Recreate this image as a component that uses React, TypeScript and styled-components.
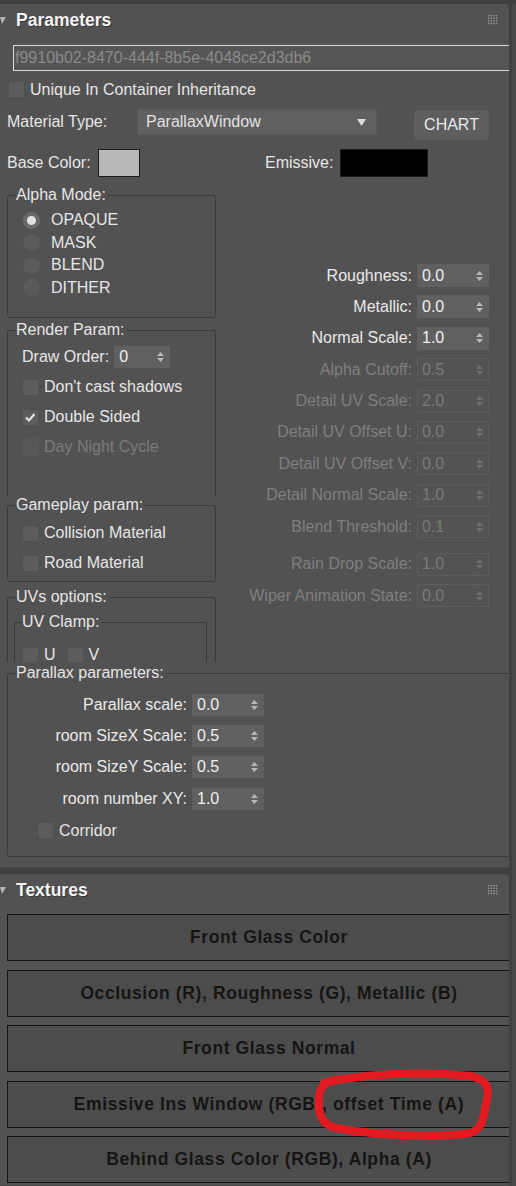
import styled, { createGlobalStyle } from 'styled-components';

const GlobalStyle = createGlobalStyle`
  html,
  body {
    margin: 0;
    padding: 0;
    background: #404040;
  }

  body {
    font-family: "Liberation Sans", Arial, sans-serif;
    font-size: 16px;
    color: #e6e6e6;
  }
`;

interface SpinParam {
  label: string;
  value: string;
  disabled?: boolean;
  spaced?: boolean;
}

const surfaceParams: SpinParam[] = [
  { label: 'Roughness:', value: '0.0' },
  { label: 'Metallic:', value: '0.0' },
  { label: 'Normal Scale:', value: '1.0' },
  { label: 'Alpha Cutoff:', value: '0.5', disabled: true },
  { label: 'Detail UV Scale:', value: '2.0', disabled: true },
  { label: 'Detail UV Offset U:', value: '0.0', disabled: true },
  { label: 'Detail UV Offset V:', value: '0.0', disabled: true },
  { label: 'Detail Normal Scale:', value: '1.0', disabled: true },
  { label: 'Blend Threshold:', value: '0.1', disabled: true },
  { label: 'Rain Drop Scale:', value: '1.0', disabled: true, spaced: true },
  { label: 'Wiper Animation State:', value: '0.0', disabled: true },
];

const parallaxParams: SpinParam[] = [
  { label: 'Parallax scale:', value: '0.0' },
  { label: 'room SizeX Scale:', value: '0.5' },
  { label: 'room SizeY Scale:', value: '0.5' },
  { label: 'room number XY:', value: '1.0' },
];

const alphaModes = ['OPAQUE', 'MASK', 'BLEND', 'DITHER'];

const textureSlots = [
  'Front Glass Color',
  'Occlusion (R), Roughness (G), Metallic (B)',
  'Front Glass Normal',
  'Emissive Ins Window (RGB), offset Time (A)',
  'Behind Glass Color (RGB), Alpha (A)',
];

function Grip() {
  return (
    <GripIcon width="10" height="10" viewBox="0 0 10 10" aria-hidden="true">
      {[0, 1, 2, 3].map((r) =>
        [0, 1, 2, 3].map((c) => (
          <rect key={`${r}-${c}`} x={c * 2.6} y={r * 2.6} width="1.4" height="1.4" fill="#9a9a9a" />
        )),
      )}
    </GripIcon>
  );
}

function RolloutTitle({ children }: { children: string }) {
  return (
    <RolloutHeader>
      <svg width="6" height="7" viewBox="0 0 6 7" aria-hidden="true">
        <polygon points="0,0 6,0 2,7" fill="#b4b4b4" />
      </svg>
      <Title>{children}</Title>
      <Grip />
    </RolloutHeader>
  );
}

function Spinner({ value, disabled, width = 72, height = 23 }: { value: string; disabled?: boolean; width?: number; height?: number }) {
  return (
    <SpinBox $disabled={disabled} $w={width} $h={height}>
      <span>{value}</span>
      <svg width="7" height="12" viewBox="0 0 7 12" aria-hidden="true">
        <path d="M0 5 3.5 1 7 5Z M0 7 3.5 11 7 7Z" fill={disabled ? '#707070' : '#b8b8b8'} />
      </svg>
    </SpinBox>
  );
}

function Check({ label, checked, disabled }: { label: string; checked?: boolean; disabled?: boolean }) {
  return (
    <CheckLabel $disabled={disabled}>
      <CheckBox $disabled={disabled}>
        {checked && (
          <svg width="17" height="17" viewBox="0 0 17 17" aria-hidden="true">
            <path d="M4 8.5 7 11.5 12.5 5" stroke="#e2e2e2" strokeWidth="2.2" fill="none" />
          </svg>
        )}
      </CheckBox>
      {label}
    </CheckLabel>
  );
}

function SpinRow({ param, labelWidth, height }: { param: SpinParam; labelWidth: number; height?: number }) {
  return (
    <ParamRow $spaced={param.spaced}>
      <ParamLabel $w={labelWidth} $disabled={param.disabled}>
        {param.label}
      </ParamLabel>
      <Spinner value={param.value} disabled={param.disabled} height={height} />
    </ParamRow>
  );
}

export default function App() {
  return (
    <Page>
      <GlobalStyle />
      <Column>
        <Rollout>
          <RolloutTitle>Parameters</RolloutTitle>
          <ParamsBody>
            <GuidField>f9910b02-8470-444f-8b5e-4048ce2d3db6</GuidField>
            <InheritRow>
              <Check label="Unique In Container Inheritance" />
            </InheritRow>

            <MaterialRow>
              <MaterialLabel>Material Type:</MaterialLabel>
              <Dropdown>
                <span>ParallaxWindow</span>
                <svg width="9" height="7" viewBox="0 0 9 7" aria-hidden="true">
                  <polygon points="0,0 9,0 4.5,7" fill="#dcdcdc" />
                </svg>
              </Dropdown>
              <ChartButton type="button">CHART</ChartButton>
            </MaterialRow>

            <ColorRow>
              <ColorCell>
                <FieldLabel>Base Color:</FieldLabel>
                <Swatch $color="#b8b8b8" $w={42} />
              </ColorCell>
              <ColorCell>
                <FieldLabel>Emissive:</FieldLabel>
                <Swatch $color="#000000" $w={88} />
              </ColorCell>
            </ColorRow>

            <MainGrid>
              <LeftColumn>
                <Group>
                  <Legend>Alpha Mode:</Legend>
                  <RadioList>
                    {alphaModes.map((mode, i) => (
                      <RadioRow key={mode}>
                        <Radio $on={i === 0} />
                        {mode}
                      </RadioRow>
                    ))}
                  </RadioList>
                </Group>

                <Group $open $mt={4}>
                  <Legend>Render Param:</Legend>
                  <RenderList>
                    <ItemRow>
                      <FieldLabel>Draw Order:</FieldLabel>
                      <Spinner value="0" width={56} height={22} />
                    </ItemRow>
                    <ItemRow>
                      <Check label="Don't cast shadows" />
                    </ItemRow>
                    <ItemRow>
                      <Check label="Double Sided" checked />
                    </ItemRow>
                    <ItemRow>
                      <Check label="Day Night Cycle" disabled />
                    </ItemRow>
                  </RenderList>
                </Group>

                <Group $mt={1}>
                  <Legend>Gameplay param:</Legend>
                  <GameplayList>
                    <ItemRow>
                      <Check label="Collision Material" />
                    </ItemRow>
                    <ItemRow>
                      <Check label="Road Material" />
                    </ItemRow>
                  </GameplayList>
                </Group>

                <ClippedGroup>
                  <Legend>UVs options:</Legend>
                  <InnerGroup>
                    <InnerLegend>UV Clamp:</InnerLegend>
                    <ClampRow>
                      <Check label="U" />
                      <Check label="V" />
                    </ClampRow>
                  </InnerGroup>
                </ClippedGroup>
              </LeftColumn>

              <RightColumn>
                {surfaceParams.map((p) => (
                  <SpinRow key={p.label} param={p} labelWidth={196} />
                ))}
              </RightColumn>
            </MainGrid>

            <ParallaxGroup>
              <Legend>Parallax parameters:</Legend>
              <ParallaxList>
                {parallaxParams.map((p) => (
                  <SpinRow key={p.label} param={p} labelWidth={179} height={22} />
                ))}
                <CorridorRow>
                  <Check label="Corridor" />
                </CorridorRow>
              </ParallaxList>
            </ParallaxGroup>
          </ParamsBody>
        </Rollout>

        <Rollout $grow>
          <RolloutTitle>Textures</RolloutTitle>
          <TextureList>
            {textureSlots.map((slot) => (
              <TextureButton key={slot} type="button">
                {slot}
              </TextureButton>
            ))}
          </TextureList>
        </Rollout>
      </Column>
      <ScrollTrack />

      <Annotation width="516" height="1186" viewBox="0 0 516 1186" aria-hidden="true">
        <path
          d="M324 1083 C 360 1074, 420 1071, 470 1076 C 489 1079, 490 1090, 486 1104 C 483 1118, 483 1129, 470 1133 C 440 1138, 380 1136, 336 1128 C 319 1124, 318 1110, 319 1096 C 320 1086, 326 1080, 342 1079"
          stroke="#e31b21"
          strokeWidth="8"
          fill="none"
          strokeLinecap="round"
          strokeLinejoin="round"
        />
      </Annotation>
    </Page>
  );
}

const Page = styled.div`
  position: relative;
  box-sizing: border-box;
  width: 516px;
  height: 1186px;
  padding-top: 4px;
  display: flex;
  overflow: hidden;
  background: #404040;
`;

const Column = styled.div`
  width: 509px;
  display: flex;
  flex-direction: column;
  gap: 6px;
`;

const ScrollTrack = styled.div`
  width: 4px;
  margin-left: 3px;
  background: #494949;
`;

const Rollout = styled.section<{ $grow?: boolean }>`
  flex: ${(p) => (p.$grow ? '1' : '0 0 auto')};
  overflow: hidden;
  border-radius: 0 4px 0 0;
  background: #525252;
  border-bottom: 1px solid #484848;
`;

const RolloutHeader = styled.div`
  height: 32px;
  display: flex;
  align-items: center;
  gap: 10px;
  padding-right: 11px;

  svg:first-child {
    margin-top: 1px;
  }
`;

const Title = styled.h2`
  flex: 1;
  margin: 0;
  color: #f4f4f4;
  font-size: 17.5px;
  font-weight: 700;
  text-shadow: 1px 1px 0 rgba(0, 0, 0, 0.35);
`;

const GripIcon = styled.svg`
  display: block;
`;

const ParamsBody = styled.div`
  padding: 9px 0 10px;
`;

const GuidField = styled.div`
  box-sizing: border-box;
  width: 520px;
  height: 26px;
  margin-left: 13px;
  padding-left: 1px;
  display: flex;
  align-items: center;
  border: 1px solid #dadada;
  color: #8a8a8a;
  background: #555555;
  white-space: nowrap;
`;

const InheritRow = styled.div`
  margin: 10px 0 0 8px;
  height: 17px;
  display: flex;
  align-items: center;
`;

const FieldLabel = styled.span`
  color: #e6e6e6;
  white-space: nowrap;
`;

const MaterialRow = styled.div`
  height: 30px;
  margin-top: 11px;
  padding-left: 7px;
  display: flex;
  align-items: flex-start;
`;

const MaterialLabel = styled(FieldLabel)`
  width: 130px;
  line-height: 26px;
`;

const Dropdown = styled.div`
  box-sizing: border-box;
  width: 240px;
  height: 26px;
  padding: 0 10px 0 8px;
  display: flex;
  align-items: center;
  justify-content: space-between;
  border: 1px solid #595959;
  color: #e2e2e2;
  background: #606060;
`;

const ChartButton = styled.button`
  box-sizing: border-box;
  width: 75px;
  height: 30px;
  margin: 1px 0 0 37px;
  padding: 0;
  border: none;
  border-radius: 5px;
  color: #e8e8e8;
  background: #5e5e5e;
  font: inherit;
  font-size: 16px;
`;

const ColorRow = styled.div`
  height: 28px;
  margin-top: 10px;
  padding-left: 7px;
  display: grid;
  grid-template-columns: 258px auto;
`;

const ColorCell = styled.div`
  display: flex;
  align-items: center;
  gap: 7px;
`;

const Swatch = styled.div<{ $color: string; $w: number }>`
  box-sizing: border-box;
  width: ${(p) => p.$w}px;
  height: 28px;
  border: 1px solid #1a1a1a;
  background: ${(p) => p.$color};
`;

const MainGrid = styled.div`
  margin-top: 10px;
  display: grid;
  grid-template-columns: 216px 1fr;
`;

const LeftColumn = styled.div`
  padding-left: 7px;
  display: flex;
  flex-direction: column;
`;

const Group = styled.fieldset<{ $open?: boolean; $mt?: number }>`
  box-sizing: border-box;
  min-width: 0;
  margin: ${(p) => p.$mt ?? 0}px 0 0;
  padding: 0;
  border: 1px solid #3b3b3b;
  border-radius: 3px;
  ${(p) => p.$open && 'border-bottom: none; border-radius: 3px 3px 0 0;'}
`;

const Legend = styled.legend`
  margin-left: 8px;
  padding: 0 2px 0 0;
  color: #e6e6e6;
  font-size: 16px;
  line-height: 16px;
`;

const InnerLegend = styled(Legend)`
  margin-left: 7px;
`;

const RadioList = styled.div`
  padding: 6px 0 18px 15px;
`;

const RadioRow = styled.div`
  height: 22.5px;
  display: flex;
  align-items: center;
  gap: 11px;
  color: #e6e6e6;
`;

const Radio = styled.span<{ $on?: boolean }>`
  position: relative;
  width: 17px;
  height: 17px;
  border-radius: 50%;
  background: ${(p) => (p.$on ? '#6a6a6a' : '#5a5a5a')};

  &::after {
    content: '';
    display: ${(p) => (p.$on ? 'block' : 'none')};
    position: absolute;
    inset: 4px;
    border-radius: 50%;
    background: #e4e4e4;
  }
`;

const RenderList = styled.div`
  padding: 4px 0 34px 14px;
`;

const GameplayList = styled.div`
  padding: 5px 0 3px 14px;
`;

const ItemRow = styled.div`
  height: 30px;
  display: flex;
  align-items: center;
  gap: 5px;
`;

const CheckLabel = styled.label<{ $disabled?: boolean }>`
  display: flex;
  align-items: center;
  gap: 5px;
  color: ${(p) => (p.$disabled ? '#7c7c7c' : '#e6e6e6')};
  white-space: nowrap;
`;

const CheckBox = styled.span<{ $disabled?: boolean }>`
  box-sizing: border-box;
  width: 17px;
  height: 17px;
  flex: 0 0 auto;
  border: 1px solid ${(p) => (p.$disabled ? '#585858' : '#505050')};
  background: ${(p) => (p.$disabled ? '#575757' : '#5c5c5c')};

  svg {
    display: block;
    margin: -1px;
  }
`;

const ClippedGroup = styled(Group)`
  height: 73px;
  margin-top: 7px;
  border-bottom: none;
  border-radius: 3px 3px 0 0;
  overflow: hidden;
`;

const InnerGroup = styled(Group)`
  height: 60px;
  margin: 9px 8px 0 6px;
  border-bottom: none;
`;

const ClampRow = styled.div`
  margin-top: 16px;
  padding-left: 7px;
  display: flex;
  gap: 11px;
`;

const RightColumn = styled.div`
  padding-top: 77px;
  display: flex;
  flex-direction: column;
  gap: 8.4px;
`;

const ParamRow = styled.div<{ $spaced?: boolean }>`
  display: flex;
  align-items: center;
  gap: 5px;
  margin-top: ${(p) => (p.$spaced ? '6.4px' : '0')};
`;

const ParamLabel = styled.span<{ $w: number; $disabled?: boolean }>`
  width: ${(p) => p.$w}px;
  text-align: right;
  white-space: nowrap;
  color: ${(p) => (p.$disabled ? '#7f7f7f' : '#eaeaea')};
`;

const SpinBox = styled.div<{ $disabled?: boolean; $w: number; $h: number }>`
  box-sizing: border-box;
  width: ${(p) => p.$w}px;
  height: ${(p) => p.$h}px;
  padding: 0 5px 0 4px;
  display: flex;
  align-items: center;
  justify-content: space-between;
  border: 1px solid ${(p) => (p.$disabled ? '#5c5c5c' : '#5f5f5f')};
  color: ${(p) => (p.$disabled ? '#7a7a7a' : '#efefef')};
  background: ${(p) => (p.$disabled ? '#535353' : '#606060')};

  svg {
    display: block;
  }
`;

const ParallaxGroup = styled(Group)`
  width: 530px;
  margin: 3px 0 0 7px;
`;

const ParallaxList = styled.div`
  padding: 8px 0 10px;
  display: flex;
  flex-direction: column;

  > div {
    height: 31.3px;
  }
`;

const CorridorRow = styled.div`
  margin-top: 1px;
  padding-left: 29px;
  display: flex;
  align-items: center;
`;

const TextureList = styled.div`
  padding: 8px 0 0 7px;
  display: flex;
  flex-direction: column;
  gap: 8.5px;
`;

const TextureButton = styled.button`
  box-sizing: border-box;
  width: 524px;
  height: 47px;
  margin: 0;
  padding: 0;
  border: 1px solid #131313;
  color: #151515;
  background: #4c4c4c;
  font-family: "Liberation Sans", Arial, sans-serif;
  font-size: 17.5px;
  font-weight: 700;
  letter-spacing: 0.6px;
  text-align: center;
  white-space: nowrap;
`;

const Annotation = styled.svg`
  position: absolute;
  inset: 0;
  pointer-events: none;
`;
